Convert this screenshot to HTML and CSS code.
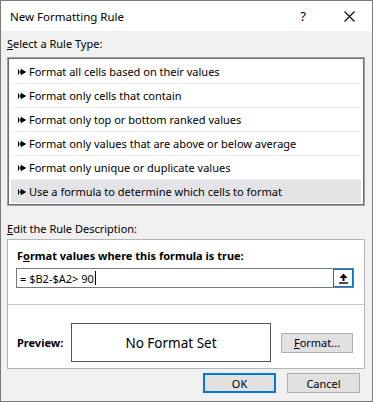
FILE: index.html
```html
<!DOCTYPE html>
<html>
<head>
<meta charset="utf-8">
<link rel="stylesheet" href="styles.css">
</head>
<body>
<div class="dialog">
  <div class="titlebar">
    <span class="title">New Formatting Rule</span>
    <span class="ctl">?</span>
    <span class="ctl close"><svg width="11" height="11" viewBox="0 0 11 11"><path d="M0.5 0.5L10.5 10.5M10.5 0.5L0.5 10.5" stroke="#000" stroke-width="1.1"/></svg></span>
  </div>
  <div class="content">
    <div class="label label-top"><u>S</u>elect a Rule Type:</div>
    <div class="list">
      <div class="row"><svg class="arrow" width="8" height="6" viewBox="0 0 8 6"><path d="M0.5 0.5v5M0 3h4M3 0.5L7.5 3L3 5.5z" stroke="#000" stroke-width="1" fill="#000"/></svg>Format all cells based on their values</div>
      <div class="row"><svg class="arrow" width="8" height="6" viewBox="0 0 8 6"><path d="M0.5 0.5v5M0 3h4M3 0.5L7.5 3L3 5.5z" stroke="#000" stroke-width="1" fill="#000"/></svg>Format only cells that contain</div>
      <div class="row"><svg class="arrow" width="8" height="6" viewBox="0 0 8 6"><path d="M0.5 0.5v5M0 3h4M3 0.5L7.5 3L3 5.5z" stroke="#000" stroke-width="1" fill="#000"/></svg>Format only top or bottom ranked values</div>
      <div class="row"><svg class="arrow" width="8" height="6" viewBox="0 0 8 6"><path d="M0.5 0.5v5M0 3h4M3 0.5L7.5 3L3 5.5z" stroke="#000" stroke-width="1" fill="#000"/></svg>Format only values that are above or below average</div>
      <div class="row"><svg class="arrow" width="8" height="6" viewBox="0 0 8 6"><path d="M0.5 0.5v5M0 3h4M3 0.5L7.5 3L3 5.5z" stroke="#000" stroke-width="1" fill="#000"/></svg>Format only unique or duplicate values</div>
      <div class="row selected"><svg class="arrow" width="8" height="6" viewBox="0 0 8 6"><path d="M0.5 0.5v5M0 3h4M3 0.5L7.5 3L3 5.5z" stroke="#000" stroke-width="1" fill="#000"/></svg>Use a formula to determine which cells to format</div>
    </div>
    <div class="label label-edit"><u>E</u>dit the Rule Description:</div>
    <div class="desc">
      <div class="desc-head">F<u>o</u>rmat values where this formula is true:</div>
      <div class="formula">
        <span class="ftext">= $B2-$A2&gt; 90<span class="caret"></span></span>
        <span class="collapse"><svg width="9" height="11" viewBox="0 0 9 11"><path d="M4.5 0.5L8.5 5H5.5V8H3.5V5H0.5z" fill="#000"/><path d="M0 10h9" stroke="#000" stroke-width="1.4"/></svg></span>
      </div>
      <div class="divider"></div>
      <div class="preview-row">
        <span class="plabel">Preview:</span>
        <div class="pbox">No Format Set</div>
        <span class="btn fmt"><u>F</u>ormat...</span>
      </div>
    </div>
    <div class="actions">
      <span class="btn ok">OK</span>
      <span class="btn">Cancel</span>
    </div>
  </div>
</div>
</body>
</html>
```
FILE: styles.css
```css
* { box-sizing: border-box; }
html, body { margin: 0; padding: 0; }
body {
  width: 373px;
  height: 402px;
  font-family: "Noto Sans", "Open Sans", sans-serif;
  font-size: 11px;
  color: #000;
}
.dialog {
  width: 373px;
  height: 402px;
  border: 1px solid #7a7a7a;
  background: #f0f0f0;
}
.titlebar {
  height: 30px;
  background: #fff;
  display: flex;
  align-items: center;
}
.title {
  flex: 1;
  padding-left: 9px;
  font-size: 11.5px;
}
.ctl {
  width: 46px;
  height: 30px;
  display: flex;
  align-items: center;
  justify-content: center;
  font-size: 13px;
}
.content {
  padding: 0 6px;
}
.label {
  line-height: 16px;
  height: 16px;
}
.label-top { margin-top: 5px; margin-bottom: 5px; }
.label-edit { margin-top: 15px; margin-bottom: 2px; }
.list {
  border: 1px solid #a0a0a0;
  box-shadow: inset 0 0 0 1px #6d6d6d;
  background: #fff;
  padding: 2px 3px 2px 3px;
  width: 358px;
}
.row {
  height: 24px;
  display: flex;
  align-items: center;
  border-bottom: 1px solid #ececec;
  padding-left: 7px;
}
.row.selected {
  background: #e3e3e8;
  border-bottom: none;
  height: 23px;
}
.arrow {
  margin-right: 3px;
  flex: none;
}
.desc {
  width: 358px;
  height: 130px;
  border: 1px solid #b4b4b4;
  background: #fff;
}
.desc-head {
  font-weight: bold;
  line-height: 16px;
  margin: 8px 0 0 9px;
}
.formula {
  margin: 4px 10px 0 8px;
  height: 20px;
  border: 1px solid #7a7a7a;
  display: flex;
  align-items: center;
}
.ftext {
  flex: 1;
  padding-left: 3px;
  display: flex;
  align-items: center;
  white-space: pre;
}
.caret {
  display: inline-block;
  width: 1px;
  height: 14px;
  background: #000;
  margin-left: 1px;
}
.collapse {
  width: 20px;
  height: 18px;
  border: 1px solid #0078d7;
  display: flex;
  align-items: center;
  justify-content: center;
}
.divider {
  height: 1px;
  background: #c8c8c8;
  margin-top: 16px;
}
.preview-row {
  display: flex;
  align-items: center;
  margin-top: 18px;
  padding-left: 9px;
}
.plabel {
  font-weight: bold;
  width: 54px;
}
.pbox {
  width: 200px;
  height: 39px;
  border: 1px solid #555;
  display: flex;
  align-items: center;
  justify-content: center;
  font-size: 13.5px;
}
.btn {
  width: 73px;
  height: 20px;
  background: #e1e1e1;
  border: 1px solid #adadad;
  display: flex;
  align-items: center;
  justify-content: center;
}
.fmt {
  width: 72px;
  margin-left: 10px;
}
.actions {
  display: flex;
  justify-content: flex-end;
  gap: 11px;
  margin-top: 4px;
  padding-right: 6px;
}
.btn.ok {
  border: 2px solid #0078d7;
}
```
